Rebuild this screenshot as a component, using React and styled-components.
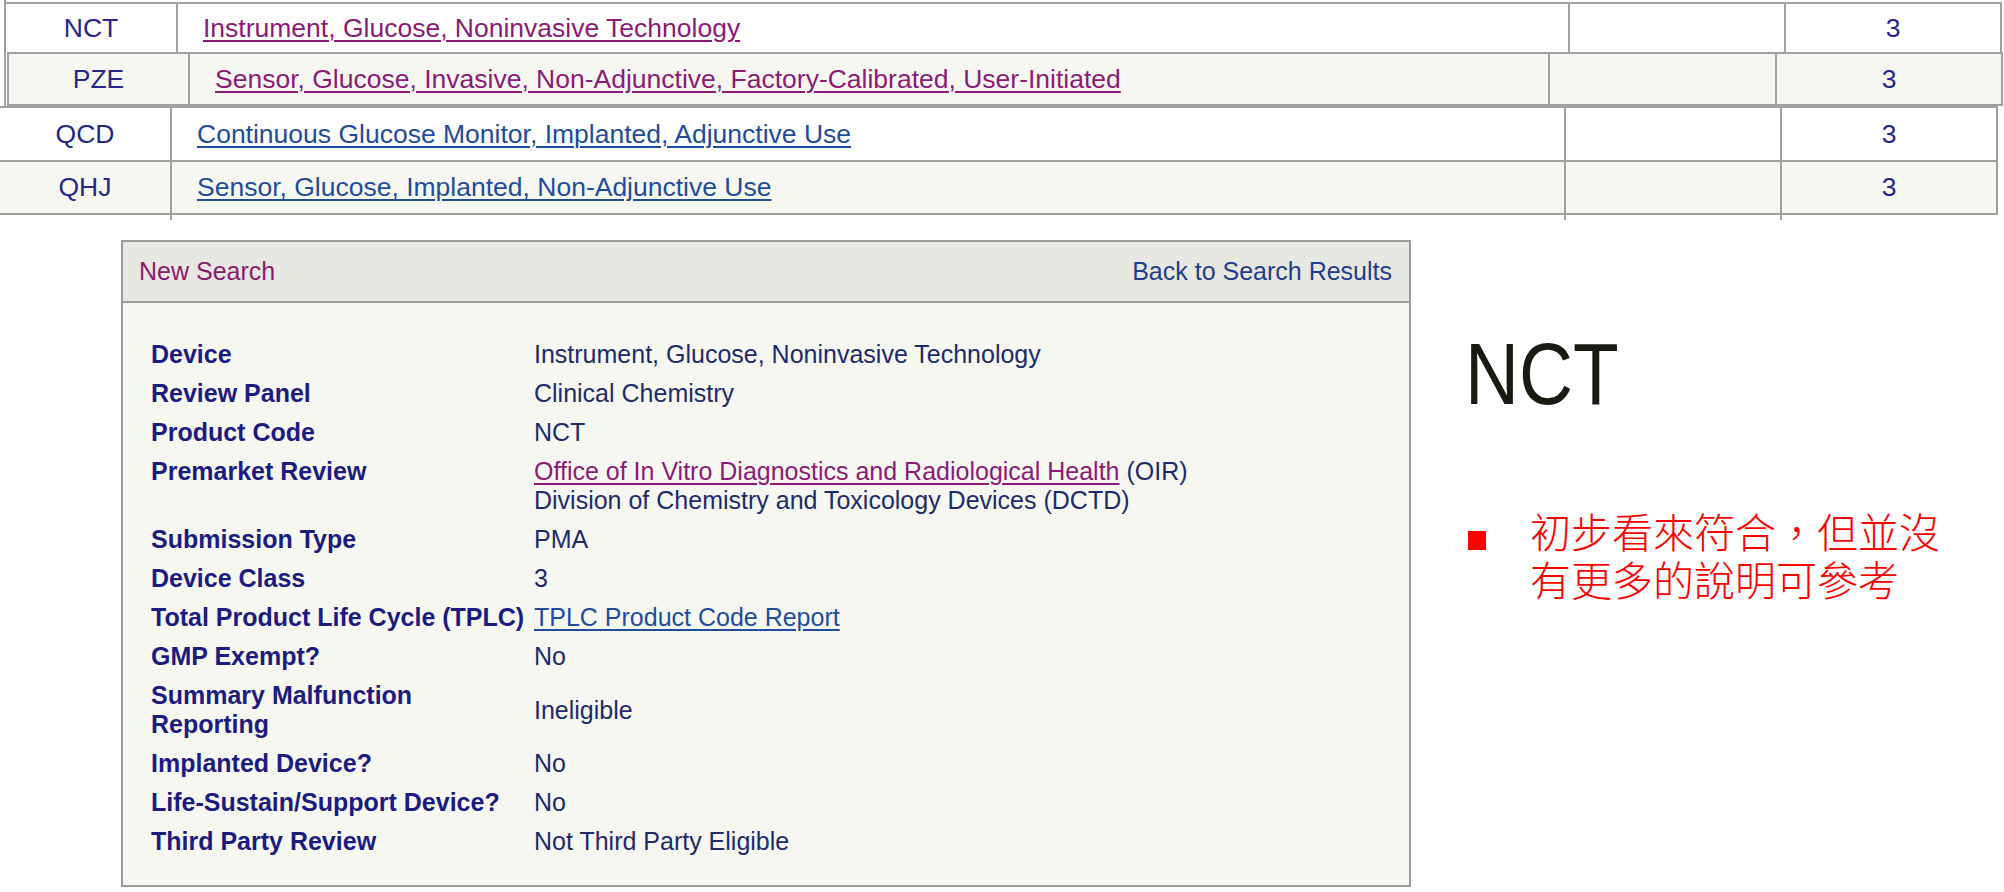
import React from 'react';
import styled, {createGlobalStyle} from 'styled-components';

const GlobalStyle = createGlobalStyle`
  body {
    margin: 0;
    background: #ffffff;
    font-family: "Liberation Sans", Arial, sans-serif;
  }
`;

const LINE = '#a0a0a0';

const Page = styled.div`
  width: 2004px;
  height: 892px;
  overflow: hidden;
`;

const TopGroup = styled.div`
  margin-left: 4px;
  padding-top: 2px;
  border-left: 2px solid ${LINE};
  width: 1996px;
`;

const Strip = styled.div`
  margin-left: ${p => p.$left || 0}px;
`;

const Row = styled.div`
  display: grid;
  grid-template-columns: ${p => p.$cols};
  height: ${p => p.$h}px;
  box-sizing: border-box;
  margin-left: ${p => p.$left || 0}px;
  width: max-content;
  border-top: 2px solid ${LINE};
  border-bottom: ${p => (p.$closed ? `2px solid ${LINE}` : 'none')};
  border-left: ${p => (p.$edge ? `2px solid ${LINE}` : 'none')};
  border-right: 2px solid ${LINE};
  background: ${p => (p.$alt ? '#f7f7f2' : '#ffffff')};
`;

const StubRow = styled(Row)`
  border-top: none;
  border-right: none;
  background: transparent;
`;

const Cell = styled.div`
  display: flex;
  align-items: center;
  justify-content: ${p => (p.$center ? 'center' : 'flex-start')};
  padding-left: ${p => (p.$center ? 0 : 25)}px;
  font-size: 26.5px;
  color: #27278a;
  & + & {
    border-left: 2px solid ${LINE};
  }
`;

const NameLink = styled.a`
  color: ${p => (p.$visited ? '#8b1a78' : '#1e4d9b')};
  text-decoration: underline;
  text-underline-offset: 3px;
  text-decoration-thickness: 1.5px;
`;

const Lower = styled.div`
  display: flex;
  margin-top: 20px;
`;

const Panel = styled.section`
  margin-left: 121px;
  width: 1290px;
  box-sizing: border-box;
  border: 2px solid #9c9c9c;
  background: #f7f7f2;
`;

const PanelHead = styled.div`
  height: 59px;
  display: flex;
  align-items: center;
  justify-content: space-between;
  padding: 0 17px 0 16px;
  background: #e8e8e3;
  border-bottom: 2px solid #9c9c9c;
  font-size: 25px;
`;

const HeadLink = styled.a`
  color: ${p => (p.$purple ? '#8b1a6e' : '#1f3d8c')};
  text-decoration: none;
`;

const DetailGrid = styled.div`
  display: grid;
  grid-template-columns: 383px 1fr;
  padding: 32px 28px 24px 28px;
  font-size: 25px;
  line-height: 29px;
`;

const Label = styled.div`
  padding: 5px 8px 5px 0;
  font-weight: bold;
  color: #1c1c80;
`;

const Value = styled.div`
  padding: 5px 0;
  align-self: center;
  color: #1c2b6b;
`;

const ValueLink = styled.a`
  color: ${p => (p.$purple ? '#8b1a78' : '#1e4d9b')};
  text-decoration: underline;
  text-underline-offset: 3px;
`;

const Notes = styled.aside`
  margin-left: 54px;
  padding-top: 90px;
`;

const Title = styled.h1`
  margin: 0;
  font-weight: normal;
  font-size: 88px;
  line-height: 88px;
  color: #1a1a12;
  transform: scaleX(0.85);
  transform-origin: left center;
`;

const BulletList = styled.ul`
  list-style: none;
  margin: 88px 0 0 3px;
  padding: 0;
`;

const BulletItem = styled.li`
  display: flex;
  gap: 44px;
`;

const Square = styled.span`
  flex: none;
  width: 18px;
  height: 19px;
  margin-top: 25px;
  background: #ff0000;
`;

const BulletText = styled.span`
  width: 430px;
  font-family: "Noto Sans CJK TC", "Noto Sans CJK SC", sans-serif;
  font-weight: 300;
  font-size: 41px;
  line-height: 48px;
  color: #ff0000;
`;

const cols1 = '170px 1392px 216px 216px';
const cols2 = '179px 1360px 227px 226px';
const cols3 = '170px 1394px 216px 216px';

const details = [
  ['Device', 'Instrument, Glucose, Noninvasive Technology'],
  ['Review Panel', 'Clinical Chemistry'],
  ['Product Code', 'NCT'],
  ['Premarket Review', (
    <>
      <ValueLink $purple href="#">Office of In Vitro Diagnostics and Radiological Health</ValueLink> (OIR)
      <br />
      Division of Chemistry and Toxicology Devices (DCTD)
    </>
  )],
  ['Submission Type', 'PMA'],
  ['Device Class', '3'],
  ['Total Product Life Cycle (TPLC)', <ValueLink href="#">TPLC Product Code Report</ValueLink>],
  ['GMP Exempt?', 'No'],
  ['Summary Malfunction Reporting', 'Ineligible'],
  ['Implanted Device?', 'No'],
  ['Life-Sustain/Support Device?', 'No'],
  ['Third Party Review', 'Not Third Party Eligible'],
];

const App = () => (
  <Page>
    <GlobalStyle />
    <TopGroup>
      <Row $cols={cols1} $h={50}>
        <Cell $center>NCT</Cell>
        <Cell><NameLink $visited href="#">Instrument, Glucose, Noninvasive Technology</NameLink></Cell>
        <Cell />
        <Cell $center>3</Cell>
      </Row>
      <Row $cols={cols2} $h={54} $left={1} $edge $alt $closed>
        <Cell $center>PZE</Cell>
        <Cell><NameLink $visited href="#">Sensor, Glucose, Invasive, Non-Adjunctive, Factory-Calibrated, User-Initiated</NameLink></Cell>
        <Cell />
        <Cell $center>3</Cell>
      </Row>
    </TopGroup>
    <Strip>
      <Row $cols={cols3} $h={54}>
        <Cell $center>QCD</Cell>
        <Cell><NameLink href="#">Continuous Glucose Monitor, Implanted, Adjunctive Use</NameLink></Cell>
        <Cell />
        <Cell $center>3</Cell>
      </Row>
      <Row $cols={cols3} $h={55} $alt $closed>
        <Cell $center>QHJ</Cell>
        <Cell><NameLink href="#">Sensor, Glucose, Implanted, Non-Adjunctive Use</NameLink></Cell>
        <Cell />
        <Cell $center>3</Cell>
      </Row>
      <StubRow $cols={cols3} $h={5}>
        <Cell />
        <Cell />
        <Cell />
        <Cell />
      </StubRow>
    </Strip>
    <Lower>
      <Panel>
        <PanelHead>
          <HeadLink $purple href="#">New Search</HeadLink>
          <HeadLink href="#">Back to Search Results</HeadLink>
        </PanelHead>
        <DetailGrid>
          {details.map(([label, value]) => (
            <React.Fragment key={label}>
              <Label>{label}</Label>
              <Value>{value}</Value>
            </React.Fragment>
          ))}
        </DetailGrid>
      </Panel>
      <Notes>
        <Title>NCT</Title>
        <BulletList>
          <BulletItem>
            <Square />
            <BulletText>初步看來符合，但並沒有更多的說明可參考</BulletText>
          </BulletItem>
        </BulletList>
      </Notes>
    </Lower>
  </Page>
);

export default App;
